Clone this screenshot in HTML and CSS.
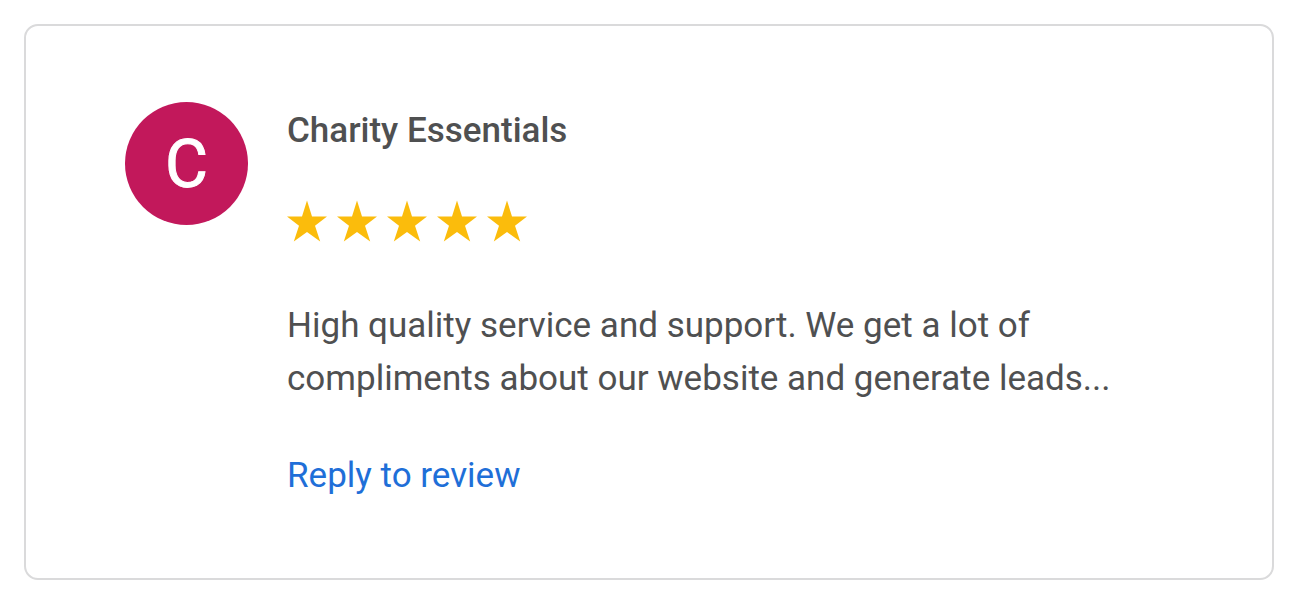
FILE: index.html
```html
<!DOCTYPE html>
<html lang="en">
<head>
<meta charset="utf-8">
<meta name="viewport" content="width=device-width, initial-scale=1">
<title>Customer review</title>
<link rel="stylesheet" href="styles.css">
</head>
<body>
<article class="review">
  <div class="avatar" aria-hidden="true">C</div>
  <div class="content">
    <h2 class="author">Charity Essentials</h2>
    <div class="stars" role="img" aria-label="5 out of 5 stars">
      <svg class="star" viewBox="0 0 40 40"><path d="M20-.5l5 16h15L28 24.8 33.2 40.5 20 31 6.8 40.5 12 24.8 0 15.5h15z"/></svg>
      <svg class="star" viewBox="0 0 40 40"><path d="M20-.5l5 16h15L28 24.8 33.2 40.5 20 31 6.8 40.5 12 24.8 0 15.5h15z"/></svg>
      <svg class="star" viewBox="0 0 40 40"><path d="M20-.5l5 16h15L28 24.8 33.2 40.5 20 31 6.8 40.5 12 24.8 0 15.5h15z"/></svg>
      <svg class="star" viewBox="0 0 40 40"><path d="M20-.5l5 16h15L28 24.8 33.2 40.5 20 31 6.8 40.5 12 24.8 0 15.5h15z"/></svg>
      <svg class="star" viewBox="0 0 40 40"><path d="M20-.5l5 16h15L28 24.8 33.2 40.5 20 31 6.8 40.5 12 24.8 0 15.5h15z"/></svg>
    </div>
    <p class="text">High quality service and support. We get a lot of compliments about our website and generate leads...</p>
    <a class="reply" href="#">Reply to review</a>
  </div>
</article>
</body>
</html>
```
FILE: styles.css
```css
* {
  box-sizing: border-box;
}

body {
  margin: 0;
  padding: 24px;
  background: #fff;
  color: #4f5051;
  font-family: Roboto, "Liberation Sans", sans-serif;
  font-size: 35px;
  line-height: 53px;
}

.review {
  display: flex;
  align-items: flex-start;
  gap: 39px;
  padding: 76px 99px;
  border: 2px solid #dadadb;
  border-radius: 14px;
}

.avatar {
  flex: none;
  width: 123px;
  height: 123px;
  border-radius: 50%;
  background: #c2185b;
  color: #fff;
  font-size: 66px;
  line-height: 126px;
  text-align: center;
  -webkit-text-stroke: 1px #fff;
}

.content {
  flex: 1;
  max-width: 860px;
  padding-top: 2px;
}

.author {
  margin: 0;
  font-size: 35px;
  font-weight: 500;
}

.stars {
  display: flex;
  gap: 10px;
  margin: 44px 0 58px;
}

.star {
  width: 40px;
  height: 40px;
  overflow: visible;
  fill: #fbbc0c;
}

.text {
  margin: 0 0 44px;
}

.reply {
  color: #1f6fd8;
  text-decoration: none;
}
```
